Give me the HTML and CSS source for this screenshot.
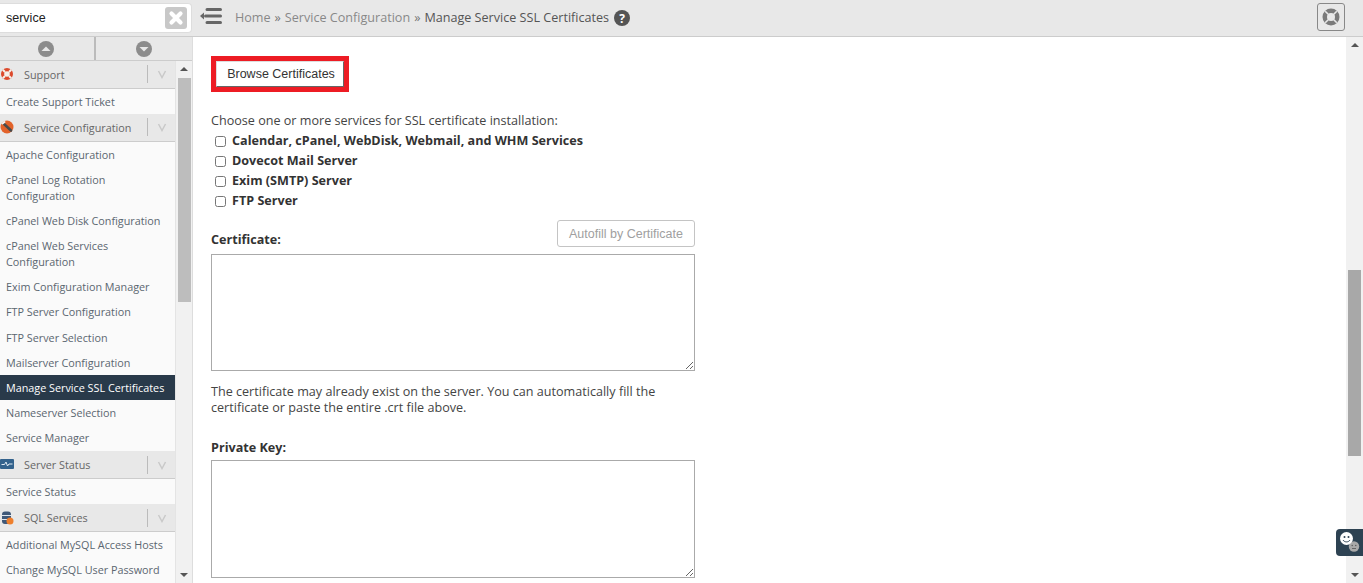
FILE: index.html
```html
<!DOCTYPE html>
<html lang="en">
<head>
<meta charset="utf-8">
<title>Manage Service SSL Certificates</title>
<link rel="stylesheet" href="styles.css">
</head>
<body>
<header class="topbar">
  <div class="search">
    <span class="search-text">service</span>
    <span class="search-clear">
      <svg viewBox="0 0 22 22" width="22" height="22"><rect x="0" y="0" width="22" height="22" rx="3" fill="#c8c8c8"/><path d="M6.500 6.500l9 9M15.500 6.500l-9 9" stroke="#fff" stroke-width="4.200" stroke-linecap="round"/></svg>
    </span>
  </div>
  <svg class="collapse" viewBox="0 0 22 18" width="22" height="18"><path d="M0 9l4-3.500v7z" fill="#666"/><path d="M7 2.500H20.500M5.500 9H20.500M7 15.500H20.500" stroke="#666" stroke-width="3" stroke-linecap="round"/></svg>
  <nav class="crumbs">
    <span class="crumb">Home</span><span class="sep">»</span>
    <span class="crumb">Service Configuration</span><span class="sep">»</span>
    <span class="crumb-current">Manage Service SSL Certificates</span>
    <svg class="help" viewBox="0 0 16 16" width="16" height="16"><circle cx="8" cy="8" r="8" fill="#555"/><text x="8" y="12.500" text-anchor="middle" class="help-q">?</text></svg>
  </nav>
  <button class="lifebuoy" type="button" aria-label="Help">
    <svg viewBox="0 0 18 18" width="18" height="18"><circle cx="9" cy="9" r="8.500" fill="#7a7a7a"/><circle cx="9" cy="9" r="4" fill="#e8e8e8"/><path d="M3.200 3.200l3 3M14.800 3.200l-3 3M3.200 14.800l3-3M14.800 14.800l-3-3" stroke="#e8e8e8" stroke-width="1.600"/></svg>
  </button>
</header>
<div class="body">
  <aside class="side">
    <div class="arrows">
      <div class="arrow-cell first"><svg viewBox="0 0 16 16" width="16" height="16"><circle cx="8" cy="8" r="8" fill="#8c8c8c"/><path d="M3.500 10L8 5.500 12.500 10z" fill="#e8e8e8"/></svg></div>
      <div class="arrow-cell"><svg viewBox="0 0 16 16" width="16" height="16"><circle cx="8" cy="8" r="8" fill="#8c8c8c"/><path d="M3.500 6L8 10.500 12.500 6z" fill="#e8e8e8"/></svg></div>
    </div>
    <div class="side-scroll">
      <ul class="menu">
        <li class="group">
          <svg class="gicon" viewBox="0 0 14 14" width="14" height="14"><circle cx="7" cy="7" r="6" fill="#dc4a2c"/><circle cx="7" cy="7" r="2.800" fill="#f4f0ea"/><path d="M2.800 2.800L5 5M11.200 2.800L9 5M2.800 11.200L5 9M11.200 11.200L9 9" stroke="#f4f0ea" stroke-width="2"/></svg>
          <span class="gname">Support</span><span class="chev"><svg viewBox="0 0 10 10" width="10" height="10"><path d="M1.500 2L5 8.500 8.500 2" fill="none" stroke="#c9c9c9" stroke-width="1.500"/></svg></span>
        </li>
        <li class="item one">Create Support Ticket</li>
        <li class="group">
          <svg class="gicon" viewBox="0 0 14 14" width="14" height="14"><circle cx="7" cy="7" r="6.500" fill="#e2622a"/><path d="M4 4l7 6.500" stroke="#4a4a4a" stroke-width="2.600" stroke-linecap="round"/><path d="M2.500 3.500l2-1.500" stroke="#f4f4f4" stroke-width="2" stroke-linecap="round"/></svg>
          <span class="gname">Service Configuration</span><span class="chev"><svg viewBox="0 0 10 10" width="10" height="10"><path d="M1.500 2L5 8.500 8.500 2" fill="none" stroke="#c9c9c9" stroke-width="1.500"/></svg></span>
        </li>
        <li class="item">Apache Configuration</li>
        <li class="item">cPanel Log Rotation Configuration</li>
        <li class="item">cPanel Web Disk Configuration</li>
        <li class="item">cPanel Web Services Configuration</li>
        <li class="item">Exim Configuration Manager</li>
        <li class="item">FTP Server Configuration</li>
        <li class="item">FTP Server Selection</li>
        <li class="item">Mailserver Configuration</li>
        <li class="item active">Manage Service SSL Certificates</li>
        <li class="item">Nameserver Selection</li>
        <li class="item last">Service Manager</li>
        <li class="group">
          <svg class="gicon" viewBox="0 0 14 11" width="14" height="11"><rect width="14" height="10" rx="1" fill="#33628c"/><path d="M1.500 5.500h3l1.500-2.500 1.500 4 1.500-2h3.500" fill="none" stroke="#dfe9f2" stroke-width="1"/></svg>
          <span class="gname">Server Status</span><span class="chev"><svg viewBox="0 0 10 10" width="10" height="10"><path d="M1.500 2L5 8.500 8.500 2" fill="none" stroke="#c9c9c9" stroke-width="1.500"/></svg></span>
        </li>
        <li class="item one">Service Status</li>
        <li class="group">
          <svg class="gicon" viewBox="0 0 14 14" width="14" height="14"><rect x="2" y="0.500" width="9" height="12.500" rx="3" fill="#3f5878"/><path d="M2 4.500h9M2 8.500h9" stroke="#dfe6ee" stroke-width="1"/><circle cx="10" cy="10" r="3.500" fill="#ee7f2d"/></svg>
          <span class="gname">SQL Services</span><span class="chev"><svg viewBox="0 0 10 10" width="10" height="10"><path d="M1.500 2L5 8.500 8.500 2" fill="none" stroke="#c9c9c9" stroke-width="1.500"/></svg></span>
        </li>
        <li class="item">Additional MySQL Access Hosts</li>
        <li class="item">Change MySQL User Password</li>
      </ul>
      <div class="sb sb-side"><span class="tri-up"></span><span class="thumb"></span><span class="tri-down"></span></div>
    </div>
  </aside>
  <main class="main">
    <div class="browse-mark"><button class="browse" type="button">Browse Certificates</button></div>
    <p class="choose">Choose one or more services for SSL certificate installation:</p>
    <label class="svc"><input type="checkbox"><span>Calendar, cPanel, WebDisk, Webmail, and WHM Services</span></label>
    <label class="svc"><input type="checkbox"><span>Dovecot Mail Server</span></label>
    <label class="svc"><input type="checkbox"><span>Exim (SMTP) Server</span></label>
    <label class="svc"><input type="checkbox"><span>FTP Server</span></label>
    <div class="field-head">
      <label class="flabel">Certificate:</label>
      <button class="autofill" type="button" disabled>Autofill by Certificate</button>
    </div>
    <textarea class="ta"></textarea>
    <p class="hint">The certificate may already exist on the server. You can automatically fill the certificate or paste the entire .crt file above.</p>
    <label class="flabel pk">Private Key:</label>
    <textarea class="ta tall"></textarea>
  </main>
  <div class="sb sb-page"><span class="tri-up"></span><span class="thumb"></span><span class="tri-down"></span></div>
</div>
<div class="chat">
  <svg viewBox="0 0 27 27" width="27" height="27"><circle cx="18" cy="17.500" r="5.200" fill="#a9a9a9"/><circle cx="16.200" cy="16.500" r="0.700" fill="#555"/><circle cx="19.800" cy="16.500" r="0.700" fill="#555"/><path d="M16 19.500h4" stroke="#555" stroke-width="0.800"/><circle cx="10.500" cy="9.500" r="6.500" fill="#fff"/><circle cx="8.500" cy="8" r="1" fill="#2d4252"/><circle cx="12.500" cy="8" r="1" fill="#2d4252"/><path d="M7 11c1.500 2.500 5.500 2.500 7 0" fill="none" stroke="#2d4252" stroke-width="1"/></svg>
</div>
</body>
</html>
```
FILE: styles.css
```css
* { box-sizing: border-box; }
html, body { margin: 0; height: 100%; overflow: hidden; }
body { font-family: "Open Sans", "Liberation Sans", sans-serif; color: #333; background: #fff; position: relative; }
.topbar { height: 37px; background: #e8e8e8; border-bottom: 1px solid #ccc; display: flex; align-items: center; }
.search { width: 192px; height: 30px; background: #fff; border: 1px solid #ddd; border-left: 0; border-radius: 0 4px 4px 0; display: flex; align-items: center; justify-content: space-between; padding: 0 4px 0 6px; }
.search-text { font: 12.500px "Liberation Sans", sans-serif; color: #222; }
.search-clear { display: flex; }
.collapse { margin: -5px 0 0 8px; }
.crumbs { display: flex; align-items: center; margin: -2px 0 0 13px; font-size: 12.600px; color: #888; white-space: nowrap; }
.crumb { color: #888; }
.sep { margin: 0 4px; color: #777; }
.crumb-current { color: #555; }
.help { margin-left: 5px; margin-top: 1px; }
.help-q { font: bold 12px "Open Sans", sans-serif; fill: #fff; }
.lifebuoy { margin-left: auto; margin-right: 18px; margin-top: -2px; width: 28px; height: 28px; padding: 0; border: 1px solid #888; border-radius: 3px; background: #e8e8e8; display: flex; align-items: center; justify-content: center; }
.body { display: flex; height: 546px; }
.side { width: 193px; flex: none; border-right: 1px solid #ddd; display: flex; flex-direction: column; background: #fff; }
.arrows { height: 24px; flex: none; display: flex; background: #e8e8e8; border-bottom: 1px solid #ccc; }
.arrow-cell { flex: 1; display: flex; align-items: center; justify-content: center; }
.arrow-cell.first { flex: none; width: 94px; padding-right: 2px; }
.arrow-cell + .arrow-cell { border-left: 2px solid #bbb; }
.side-scroll { flex: 1; min-height: 0; display: flex; overflow: hidden; }
.menu { list-style: none; margin: 0; padding: 0; width: 176px; flex: none; font-size: 10.800px; background: #fafafa; border-right: 1px solid #e4e4e4; }
.group { height: 27.500px; display: flex; align-items: center; background: #e8e8e8; border-bottom: 1px solid #ccc; color: #666; }
.gicon { flex: none; width: 14px; }
.gname { margin-left: 10px; flex: 1; }
.chev { width: 28px; height: 18px; flex: none; border-left: 1px solid #bbb; display: flex; align-items: center; justify-content: center; }
.item { padding: 5px 6px 4.200px; line-height: 16px; color: #5b6670; }
.item.one { padding: 5px 6px 4.500px; }
.item.last { padding-bottom: 5px; }
.item.active { background: #293a4a; color: #fff; }
.sb { flex: none; width: 17px; background: #f1f1f1; position: relative; }
.sb-side { width: 16px; }
.sb-page { margin-left: auto; width: 17px; }
.tri-up, .tri-down { position: absolute; left: 50%; margin-left: -4px; width: 0; height: 0; border-left: 4px solid transparent; border-right: 4px solid transparent; }
.tri-up { top: 6px; border-bottom: 4px solid #555; }
.tri-down { bottom: 6px; border-top: 4px solid #555; }
.thumb { position: absolute; left: 2px; }
.sb-side .thumb { top: 17px; height: 224px; right: 1px; background: #bdbdbd; }
.sb-page .thumb { top: 233px; height: 186px; right: 2px; background: #a8a8a8; }
.main { flex: 1; min-width: 0; padding: 19px 0 0 18px; overflow: hidden; font-size: 12.600px; }
.browse-mark { width: 138px; height: 36px; border: 5px solid #ed1c24; }
.browse { width: 100%; height: 100%; background: #fff; border: 1px solid #bbb; border-color: #ddd #666 #666 #ddd; padding: 0 0 0 2px; font: 12.500px "Liberation Sans", sans-serif; color: #333; }
.choose { margin: 20px 0 0; line-height: 18px; color: #444; }
.svc { display: flex; align-items: center; height: 20px; font-weight: 700; color: #333; }
.svc input { margin: 2px 6px 0 4px; width: 11px; height: 11px; }
.field-head { width: 484px; display: flex; justify-content: space-between; align-items: flex-end; margin: 10px 0 7px; height: 27px; }
.flabel { display: block; font-weight: 700; color: #333; line-height: 20px; }
.field-head .flabel { margin-bottom: -3px; }
.autofill { width: 138px; height: 27px; padding: 0; background: #fff; border: 1px solid #c4c4c4; border-radius: 3px; font: 12.500px "Liberation Sans", sans-serif; color: #a0a0a0; }
.ta { display: block; width: 484px; height: 117px; margin: 0; border: 1px solid #aaa; background: #fff; padding: 0; }
.ta.tall { height: 118px; }
.hint { margin: 13px 0 0; width: 484px; line-height: 16px; color: #444; }
.pk { margin: 22px 0 2px; }
.chat { position: absolute; right: 0; top: 529px; width: 27px; height: 27px; background: #2d4252; border-radius: 4px 0 0 4px; display: flex; }
```
